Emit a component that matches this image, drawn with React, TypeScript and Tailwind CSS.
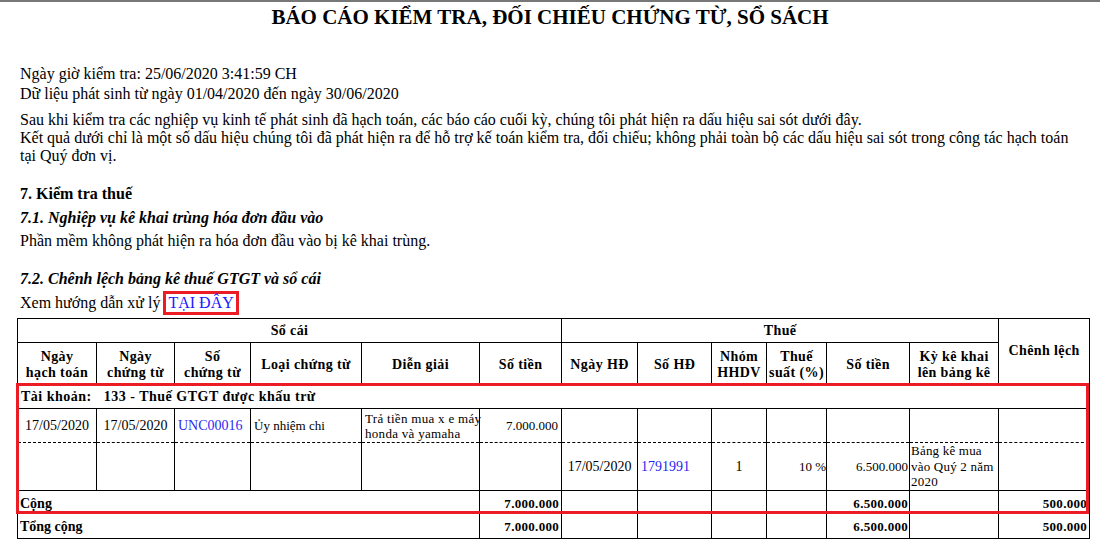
const th = 'border border-black px-[2px] text-[14px] leading-[16px] tracking-[0.4px] font-bold text-center align-middle';
const base = 'border border-black px-[3px] align-middle';
const dashB = '[border-bottom-style:dashed]';
const dashT = '[border-top-style:dashed]';

const colWidths = [
  'w-[79px]', 'w-[78px]', 'w-[76px]', 'w-[111px]', 'w-[118px]', 'w-[82px]',
  'w-[76px]', 'w-[74px]', 'w-[55px]', 'w-[60px]', 'w-[83px]', 'w-[89px]', 'w-[91px]',
];

function ReportTable() {
  return (
    <div className="relative ml-[17px] w-[1072px]">
      <table className="table-fixed border-collapse w-[1072px]">
        <colgroup>
          {colWidths.map((w, i) => (
            <col key={i} className={w} />
          ))}
        </colgroup>
        <thead>
          <tr className="h-[24px]">
            <th colSpan={6} className={`${th} pt-[1px]`}>Sổ cái</th>
            <th colSpan={6} className={`${th} pt-[1px]`}>Thuế</th>
            <th rowSpan={2} className={th}>Chênh lệch</th>
          </tr>
          <tr className="h-[41px] [&>th]:pt-[4px]">
            <th className={th}>Ngày<br />hạch toán</th>
            <th className={th}>Ngày<br />chứng từ</th>
            <th className={th}>Số<br />chứng từ</th>
            <th className={th}>Loại chứng từ</th>
            <th className={th}>Diễn giải</th>
            <th className={th}>Số tiền</th>
            <th className={th}>Ngày HĐ</th>
            <th className={th}>Số HĐ</th>
            <th className={th}>Nhóm<br />HHDV</th>
            <th className={`${th} px-0`}>Thuế<br />suất (%)</th>
            <th className={th}>Số tiền</th>
            <th className={th}>Kỳ kê khai<br />lên bảng kê</th>
          </tr>
        </thead>
        <tbody>
          <tr className="h-[25px]">
            <td colSpan={13} className={`${base} pt-[2px] text-[14px] leading-[16px] tracking-[0.5px] font-bold whitespace-pre`}>
              Tài khoản:   133 - Thuế GTGT được khấu trừ
            </td>
          </tr>
          <tr className="h-[34px] text-[14px] leading-[16px]">
            <td className={`${base} ${dashB} text-center`}>17/05/2020</td>
            <td className={`${base} ${dashB} text-center`}>17/05/2020</td>
            <td className={`${base} ${dashB} text-[#2b2bf0]`}>UNC00016</td>
            <td className={`${base} ${dashB} text-[13px]`}>Ủy nhiệm chi</td>
            <td className={`${base} ${dashB} text-[13px] leading-[15px] tracking-[0.3px] whitespace-nowrap`}>
              Trả tiền mua x e máy<br />honda và yamaha
            </td>
            <td className={`${base} ${dashB} text-[13px] text-right`}>7.000.000</td>
            <td className={`${base} ${dashB}`}></td>
            <td className={`${base} ${dashB}`}></td>
            <td className={`${base} ${dashB}`}></td>
            <td className={`${base} ${dashB}`}></td>
            <td className={`${base} ${dashB}`}></td>
            <td className={`${base} ${dashB}`}></td>
            <td className={`${base} ${dashB}`}></td>
          </tr>
          <tr className="h-[48px] text-[14px] leading-[16px]">
            <td className={`${base} ${dashT}`}></td>
            <td className={`${base} ${dashT}`}></td>
            <td className={`${base} ${dashT}`}></td>
            <td className={`${base} ${dashT}`}></td>
            <td className={`${base} ${dashT}`}></td>
            <td className={`${base} ${dashT}`}></td>
            <td className={`${base} ${dashT} text-center`}>17/05/2020</td>
            <td className={`${base} ${dashT} text-[#1f1ff5]`}>1791991</td>
            <td className={`${base} ${dashT} text-center`}>1</td>
            <td className={`${base} ${dashT} text-[13px] text-right pr-0 whitespace-nowrap`}>10 %</td>
            <td className={`${base} ${dashT} text-[13px] text-right pr-[1px]`}>6.500.000</td>
            <td className={`${base} ${dashT} text-[13px] leading-[15.5px] tracking-[0.2px] pl-[1px] whitespace-nowrap`}>
              Bảng kê mua<br />vào Quý 2 năm<br />2020
            </td>
            <td className={`${base} ${dashT}`}></td>
          </tr>
          <tr className="h-[23px] font-bold text-[14px] leading-[16px] [&>td]:pt-[3px]">
            <td colSpan={5} className={`${base} pl-[2px]`}>Cộng</td>
            <td className={`${base} text-[13px] text-right tracking-[0.3px] pr-[2px]`}>7.000.000</td>
            <td className={base}></td>
            <td className={base}></td>
            <td className={base}></td>
            <td className={base}></td>
            <td className={`${base} text-[13px] text-right tracking-[0.3px] pr-[1px]`}>6.500.000</td>
            <td className={base}></td>
            <td className={`${base} text-[13px] text-right tracking-[0.3px] pr-[2px]`}>500.000</td>
          </tr>
          <tr className="h-[25px] font-bold text-[14px] leading-[16px] [&>td]:pt-[1px]">
            <td colSpan={5} className={`${base} pl-[2px]`}>Tổng cộng</td>
            <td className={`${base} text-[13px] text-right tracking-[0.3px] pr-[2px]`}>7.000.000</td>
            <td className={base}></td>
            <td className={base}></td>
            <td className={base}></td>
            <td className={base}></td>
            <td className={`${base} text-[13px] text-right tracking-[0.3px] pr-[1px]`}>6.500.000</td>
            <td className={base}></td>
            <td className={`${base} text-[13px] text-right tracking-[0.3px] pr-[2px]`}>500.000</td>
          </tr>
        </tbody>
      </table>
      {/* khung đỏ đánh dấu */}
      <div className="pointer-events-none absolute left-[-1px] top-[65px] w-[1073px] h-[131px] border-[3px] border-[#ec1c24]" />
    </div>
  );
}

export default function App() {
  return (
    <div className="min-h-screen bg-white text-black font-['Liberation_Serif','Times_New_Roman',serif]">
      <div className="h-[2px] bg-[#777777]" />
      <h1 className="pt-[4px] text-center text-[21px] leading-[23px] font-bold">
        BÁO CÁO KIỂM TRA, ĐỐI CHIẾU CHỨNG TỪ, SỔ SÁCH
      </h1>

      <div className="pl-[20px] pr-[16px] text-[16px]">
        <div className="mt-[35px] leading-[20px]">
          <div>Ngày giờ kiểm tra: 25/06/2020 3:41:59 CH</div>
          <div>Dữ liệu phát sinh từ ngày 01/04/2020 đến ngày 30/06/2020</div>
        </div>
        <p className="mt-[7px] leading-[18px]">
          Sau khi kiểm tra các nghiệp vụ kinh tế phát sinh đã hạch toán, các báo cáo cuối kỳ, chúng tôi phát hiện ra dấu hiệu sai sót dưới đây.
          <br />
          Kết quả dưới chỉ là một số dấu hiệu chúng tôi đã phát hiện ra để hỗ trợ kế toán kiểm tra, đối chiếu; không phải toàn bộ các dấu hiệu sai sót trong công tác hạch toán tại Quý đơn vị.
        </p>

        <div className="mt-[17px] leading-[24px] font-bold">7. Kiểm tra thuế</div>
        <div className="leading-[24px] font-bold italic">7.1. Nghiệp vụ kê khai trùng hóa đơn đầu vào</div>
        <div className="leading-[22px]">Phần mềm không phát hiện ra hóa đơn đầu vào bị kê khai trùng.</div>

        <div className="mt-[15px] leading-[24px] font-bold italic">7.2. Chênh lệch bảng kê thuế GTGT và sổ cái</div>
        <div className="leading-[24px]">
          Xem hướng dẫn xử lý
          <span className="ml-[3px] inline-block border-[3px] border-[#ec1c24] px-[2px] leading-[18px] text-[#1a1aff]">TẠI ĐÂY</span>
        </div>
      </div>

      <div className="mt-[3px]">
        <ReportTable />
      </div>
    </div>
  );
}
